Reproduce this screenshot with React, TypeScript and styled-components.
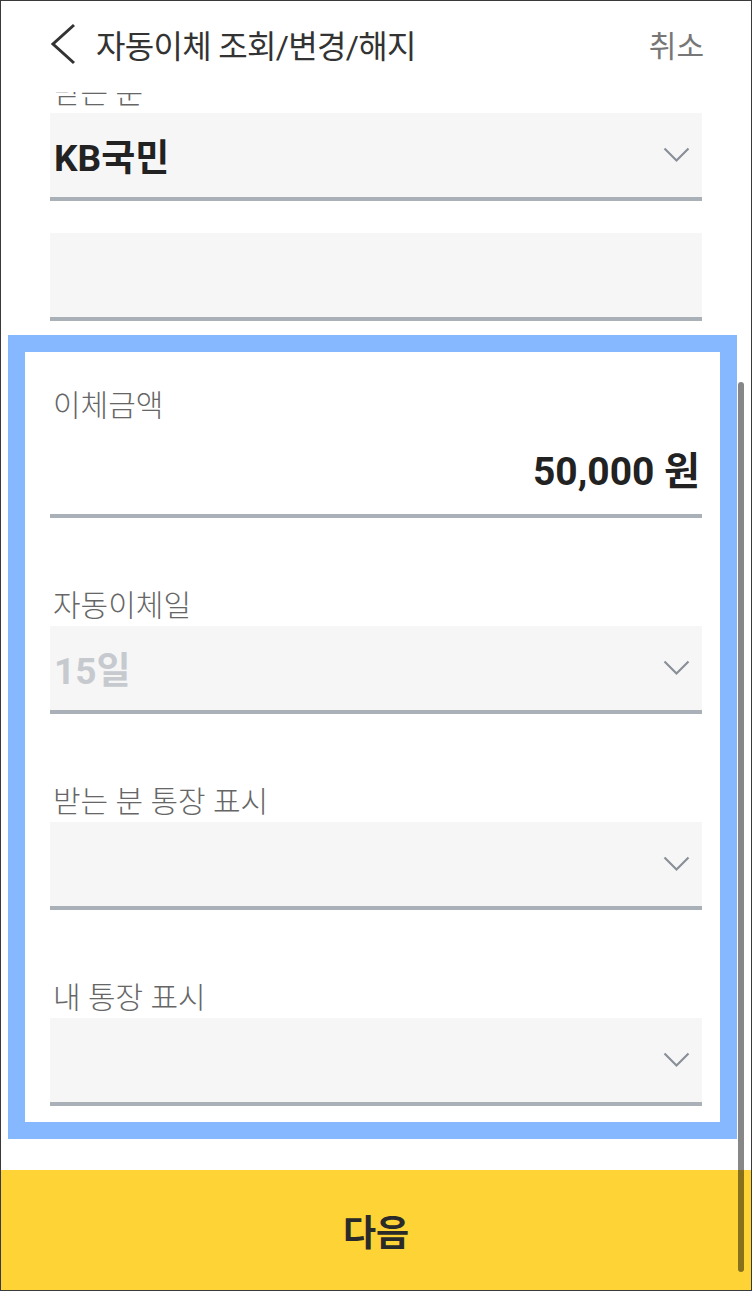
import { FC, useLayoutEffect, useRef } from "react";
import styled, { createGlobalStyle } from "styled-components";

const GlobalStyle = createGlobalStyle`
  html, body {
    margin: 0;
    padding: 0;
    background: #fff;
  }
  body {
    font-family: Roboto, "Noto Sans CJK KR", sans-serif;
  }
  * {
    box-sizing: border-box;
  }
`;

const Screen = styled.div`
  position: relative;
  width: 752px;
  height: 1291px;
  border: 1px solid #3a3a3a;
  background: #fff;
  display: flex;
  flex-direction: column;
  overflow: hidden;
`;

const Header = styled.header`
  height: 91px;
  flex-shrink: 0;
  display: flex;
  align-items: center;
  padding: 0 47px 6px 49px;
  background: #fff;
`;

const BackButton = styled.button`
  display: flex;
  align-items: center;
  border: 0;
  background: none;
  padding: 0;
  margin-right: 20px;
  cursor: pointer;
`;

const Title = styled.h1`
  flex: 1;
  margin: 0;
  font-size: 32px;
  font-weight: 400;
  color: #333;
  letter-spacing: -0.7px;
`;

const Cancel = styled.button`
  border: 0;
  background: none;
  padding: 0;
  font-family: inherit;
  font-size: 30px;
  color: #777;
`;

const Scroller = styled.div`
  flex: 1;
  overflow-y: auto;
  scrollbar-width: none;
  &::-webkit-scrollbar {
    display: none;
  }
`;

const Content = styled.div`
  padding: 40px 49px 31px;
  display: flex;
  flex-direction: column;
`;

const Group = styled.div<{ $gap?: number }>`
  display: flex;
  flex-direction: column;
  margin-top: ${(p) => p.$gap ?? 0}px;
`;

const Label = styled.div`
  height: 40px;
  line-height: 40px;
  padding-left: 3px;
  font-size: 30px;
  font-weight: 300;
  color: #666;
`;

const Box = styled.div<{ $filled?: boolean; $tall?: boolean }>`
  height: ${(p) => (p.$tall ? 92 : 88)}px;
  border-bottom: 4px solid #a9b0b8;
  background: ${(p) => (p.$filled ? "#f6f6f6" : "transparent")};
  display: flex;
  align-items: center;
  justify-content: ${(p) => (p.$tall ? "flex-end" : "space-between")};
  padding: ${(p) => (p.$tall ? "0 2px 4px 4px" : "0 12px 0 4px")};
`;

const Value = styled.span<{ $muted?: boolean }>`
  font-size: 37px;
  font-weight: 700;
  color: ${(p) => (p.$muted ? "#c6cacf" : "#222")};
`;

const Amount = styled.span`
  font-size: 39px;
  font-weight: 700;
  color: #222;
`;

const Highlight = styled.section`
  margin: 14px -35px 0 -42px;
  border: 17px solid #85b8ff;
  padding: 34px 18px 16px 25px;
  display: flex;
  flex-direction: column;
`;

const NextButton = styled.button`
  height: 120px;
  flex-shrink: 0;
  border: 0;
  background: #fdd335;
  font-family: inherit;
  font-size: 36px;
  font-weight: 700;
  color: #2a2a2a;
`;

const ScrollThumb = styled.div`
  position: absolute;
  top: 381px;
  right: 7px;
  width: 6px;
  height: 890px;
  border-radius: 3px;
  background: rgba(0, 0, 0, 0.47);
  pointer-events: none;
`;

const Chevron: FC = () => (
  <svg width="27" height="16" viewBox="0 0 27 16" fill="none">
    <path d="M1.5 1.5 L13.5 13.5 L25.5 1.5" stroke="#8a9099" strokeWidth="2.2" />
  </svg>
);

const BackIcon: FC = () => (
  <svg width="26" height="42" viewBox="0 0 26 42" fill="none">
    <path d="M24 2 L3 21 L24 40" stroke="#333" strokeWidth="3" />
  </svg>
);

type SelectProps = { label?: string; value?: string; muted?: boolean; gap?: number };

const SelectField: FC<SelectProps> = ({ label, value, muted, gap }) => (
  <Group $gap={gap}>
    {label && <Label>{label}</Label>}
    <Box $filled>
      <Value $muted={muted}>{value}</Value>
      <Chevron />
    </Box>
  </Group>
);

const App: FC = () => {
  const scrollRef = useRef<HTMLDivElement>(null);

  // 화면이 아래까지 스크롤된 상태
  useLayoutEffect(() => {
    const el = scrollRef.current;
    if (el) el.scrollTop = el.scrollHeight;
  }, []);

  return (
    <Screen>
      <GlobalStyle />
      <Header>
        <BackButton aria-label="뒤로">
          <BackIcon />
        </BackButton>
        <Title>자동이체 조회/변경/해지</Title>
        <Cancel>취소</Cancel>
      </Header>

      <Scroller ref={scrollRef}>
        <Content>
          <SelectField label="받는 분" value="KB국민" />
          <Group $gap={32}>
            <Box $filled />
          </Group>

          <Highlight>
            <Group>
              <Label>이체금액</Label>
              <Box $tall>
                <Amount>50,000 원</Amount>
              </Box>
            </Group>
            <SelectField label="자동이체일" value="15일" muted gap={68} />
            <SelectField label="받는 분 통장 표시" gap={68} />
            <SelectField label="내 통장 표시" gap={68} />
          </Highlight>
        </Content>
      </Scroller>

      <NextButton>다음</NextButton>
      <ScrollThumb />
    </Screen>
  );
};

export default App;
